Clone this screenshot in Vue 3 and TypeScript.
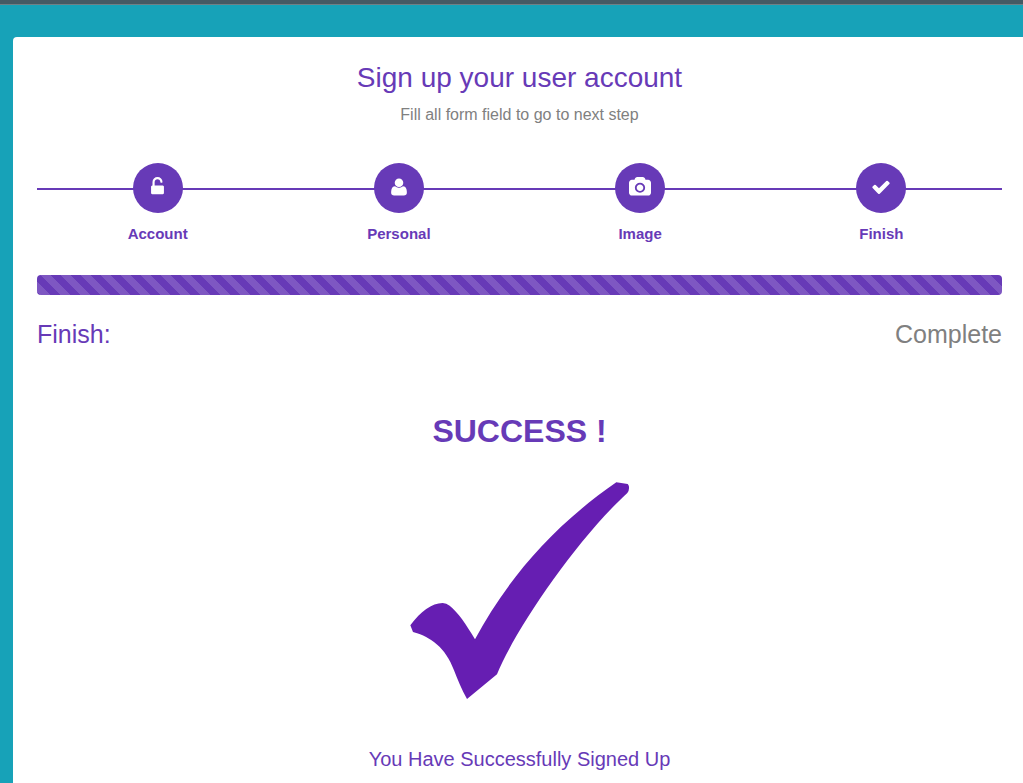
<script setup lang="ts">
interface Step {
  label: string
  width: number
  viewBox: string
  path: string
}

const steps: Step[] = [
  {
    label: 'Account',
    width: 20,
    viewBox: '45 0 1792 1792',
    path: 'M1376 768q40 0 68 28t28 68v576q0 40-28 68t-68 28h-960q-40 0-68-28t-28-68v-576q0-40 28-68t68-28h32v-320q0-185 131.5-316.5t316.5-131.5 316.5 131.5 131.5 316.5q0 26-19 45t-45 19h-64q-26 0-45-19t-19-45q0-106-75-181t-181-75-181 75-75 181v320h736z',
  },
  {
    label: 'Personal',
    width: 20,
    viewBox: '0 0 1792 1792',
    path: 'M1600 1405q0 120-73 189.5t-194 69.5h-874q-121 0-194-69.5t-73-189.5q0-53 3.5-103.5t14-109 26.5-108.5 43-97.5 62-81 85.5-53.5 111.5-20q9 0 42 21.5t74.5 48 108 48 133.5 21.5 133.5-21.5 108-48 74.5-48 42-21.5q61 0 111.5 20t85.5 53.5 62 81 43 97.5 26.5 108.5 14 109 3.5 103.5zm-320-893q0 159-112.5 271.5t-271.5 112.5-271.5-112.5-112.5-271.5 112.5-271.5 271.5-112.5 271.5 112.5 112.5 271.5z',
  },
  {
    label: 'Image',
    width: 22,
    viewBox: '0 0 1920 1792',
    path: 'M960 672q119 0 203.5 84.5t84.5 203.5-84.5 203.5-203.5 84.5-203.5-84.5-84.5-203.5 84.5-203.5 203.5-84.5zm704-416q106 0 181 75t75 181v896q0 106-75 181t-181 75h-1408q-106 0-181-75t-75-181v-896q0-106 75-181t181-75h224l51-136q19-49 69.5-84.5t103.5-35.5h512q53 0 103.5 35.5t69.5 84.5l51 136h224zm-704 1152q185 0 316.5-131.5t131.5-316.5-131.5-316.5-316.5-131.5-316.5 131.5-131.5 316.5 131.5 316.5 316.5 131.5z',
  },
  {
    label: 'Finish',
    width: 20,
    viewBox: '0 0 1792 1792',
    path: 'M1671 566q0 40-28 68l-724 724-136 136q-28 28-68 28t-68-28l-136-136-362-362q-28-28-28-68t28-68l136-136q28-28 68-28t68 28l294 295 656-657q28-28 68-28t68 28l136 136q28 28 28 68z',
  },
]
</script>

<template>
  <div class="page">
    <div class="topbar"></div>
    <main class="card">
      <h2 class="title">Sign up your user account</h2>
      <p class="subtitle">Fill all form field to go to next step</p>
      <ul class="steps">
        <li v-for="step in steps" :key="step.label" class="step">
          <span class="circle">
            <svg :width="step.width" height="20" :viewBox="step.viewBox" preserveAspectRatio="none" fill="#fff">
              <path :d="step.path" />
            </svg>
          </span>
          <strong class="label">{{ step.label }}</strong>
        </li>
      </ul>
      <div class="progress"></div>
      <div class="heading">
        <span class="stage">Finish:</span>
        <span class="status">Complete</span>
      </div>
      <h2 class="success">SUCCESS !</h2>
      <svg class="tick" width="219" height="217" viewBox="30 35 657 651" fill="#661eb2">
        <path d="M31 465C61 424 96 398 128 398Q139 398 149 406C174 426 198 461 225 507C320 330 455 170 649 36L683 41Q688 47 687 54Q687 62 682 68C530 207 345 478 291 612L201 686C185 658 172 625 162 600C137 532 92 499 39 485Z" />
      </svg>
      <h5 class="message">You Have Successfully Signed Up</h5>
    </main>
  </div>
</template>

<style>
body {
  margin: 0;
  overflow: hidden;
}
</style>

<style scoped>
.page {
  height: 783px;
  overflow: hidden;
  background: #17a2b8;
  font-family: "Liberation Sans", Arial, sans-serif;
  color: #673ab7;
}
.topbar {
  box-sizing: border-box;
  height: 5px;
  background: #455a64;
  border-bottom: 1px solid #708086;
}
.card {
  box-sizing: border-box;
  display: flex;
  flex-direction: column;
  width: 1013px;
  height: 800px;
  margin: 32px 0 0 13px;
  padding: 24px 24px 0;
  background: #fff;
  border-radius: 4px;
}
.title {
  margin: 0;
  font-size: 28px;
  line-height: 34px;
  font-weight: 400;
  text-align: center;
}
.subtitle {
  margin: 8px 0 0;
  font-size: 16px;
  line-height: 24px;
  color: #808080;
  text-align: center;
}
.steps {
  display: flex;
  margin: 36px 0 0;
  padding: 0;
  list-style: none;
  background: linear-gradient(#673ab7, #673ab7) 0 25px / 100% 2px no-repeat;
}
.step {
  flex: 1;
  display: flex;
  flex-direction: column;
  align-items: center;
}
.circle {
  box-sizing: border-box;
  display: flex;
  justify-content: center;
  align-items: flex-start;
  width: 50px;
  height: 50px;
  padding-top: 14px;
  border-radius: 50%;
  background: #673ab7;
}
.label {
  margin-top: 10px;
  font-size: 15px;
  line-height: 22px;
}
.progress {
  height: 20px;
  margin-top: 30px;
  border-radius: 4px;
  background-color: #673ab7;
  background-image: linear-gradient(45deg, rgba(255, 255, 255, 0.15) 25%, transparent 25%, transparent 50%, rgba(255, 255, 255, 0.15) 50%, rgba(255, 255, 255, 0.15) 75%, transparent 75%, transparent);
  background-position: 4px 0;
  background-size: 20px 20px;
}
.heading {
  display: flex;
  justify-content: space-between;
  margin-top: 24px;
  font-size: 25px;
  line-height: 30px;
}
.status {
  color: #808080;
}
.success {
  margin: 63px 0 0;
  font-size: 32px;
  line-height: 38px;
  text-align: center;
}
.tick {
  display: block;
  align-self: center;
  margin-top: 32px;
}
.message {
  margin: 48px 0 0;
  font-size: 20px;
  line-height: 24px;
  font-weight: 400;
  text-align: center;
}
</style>
